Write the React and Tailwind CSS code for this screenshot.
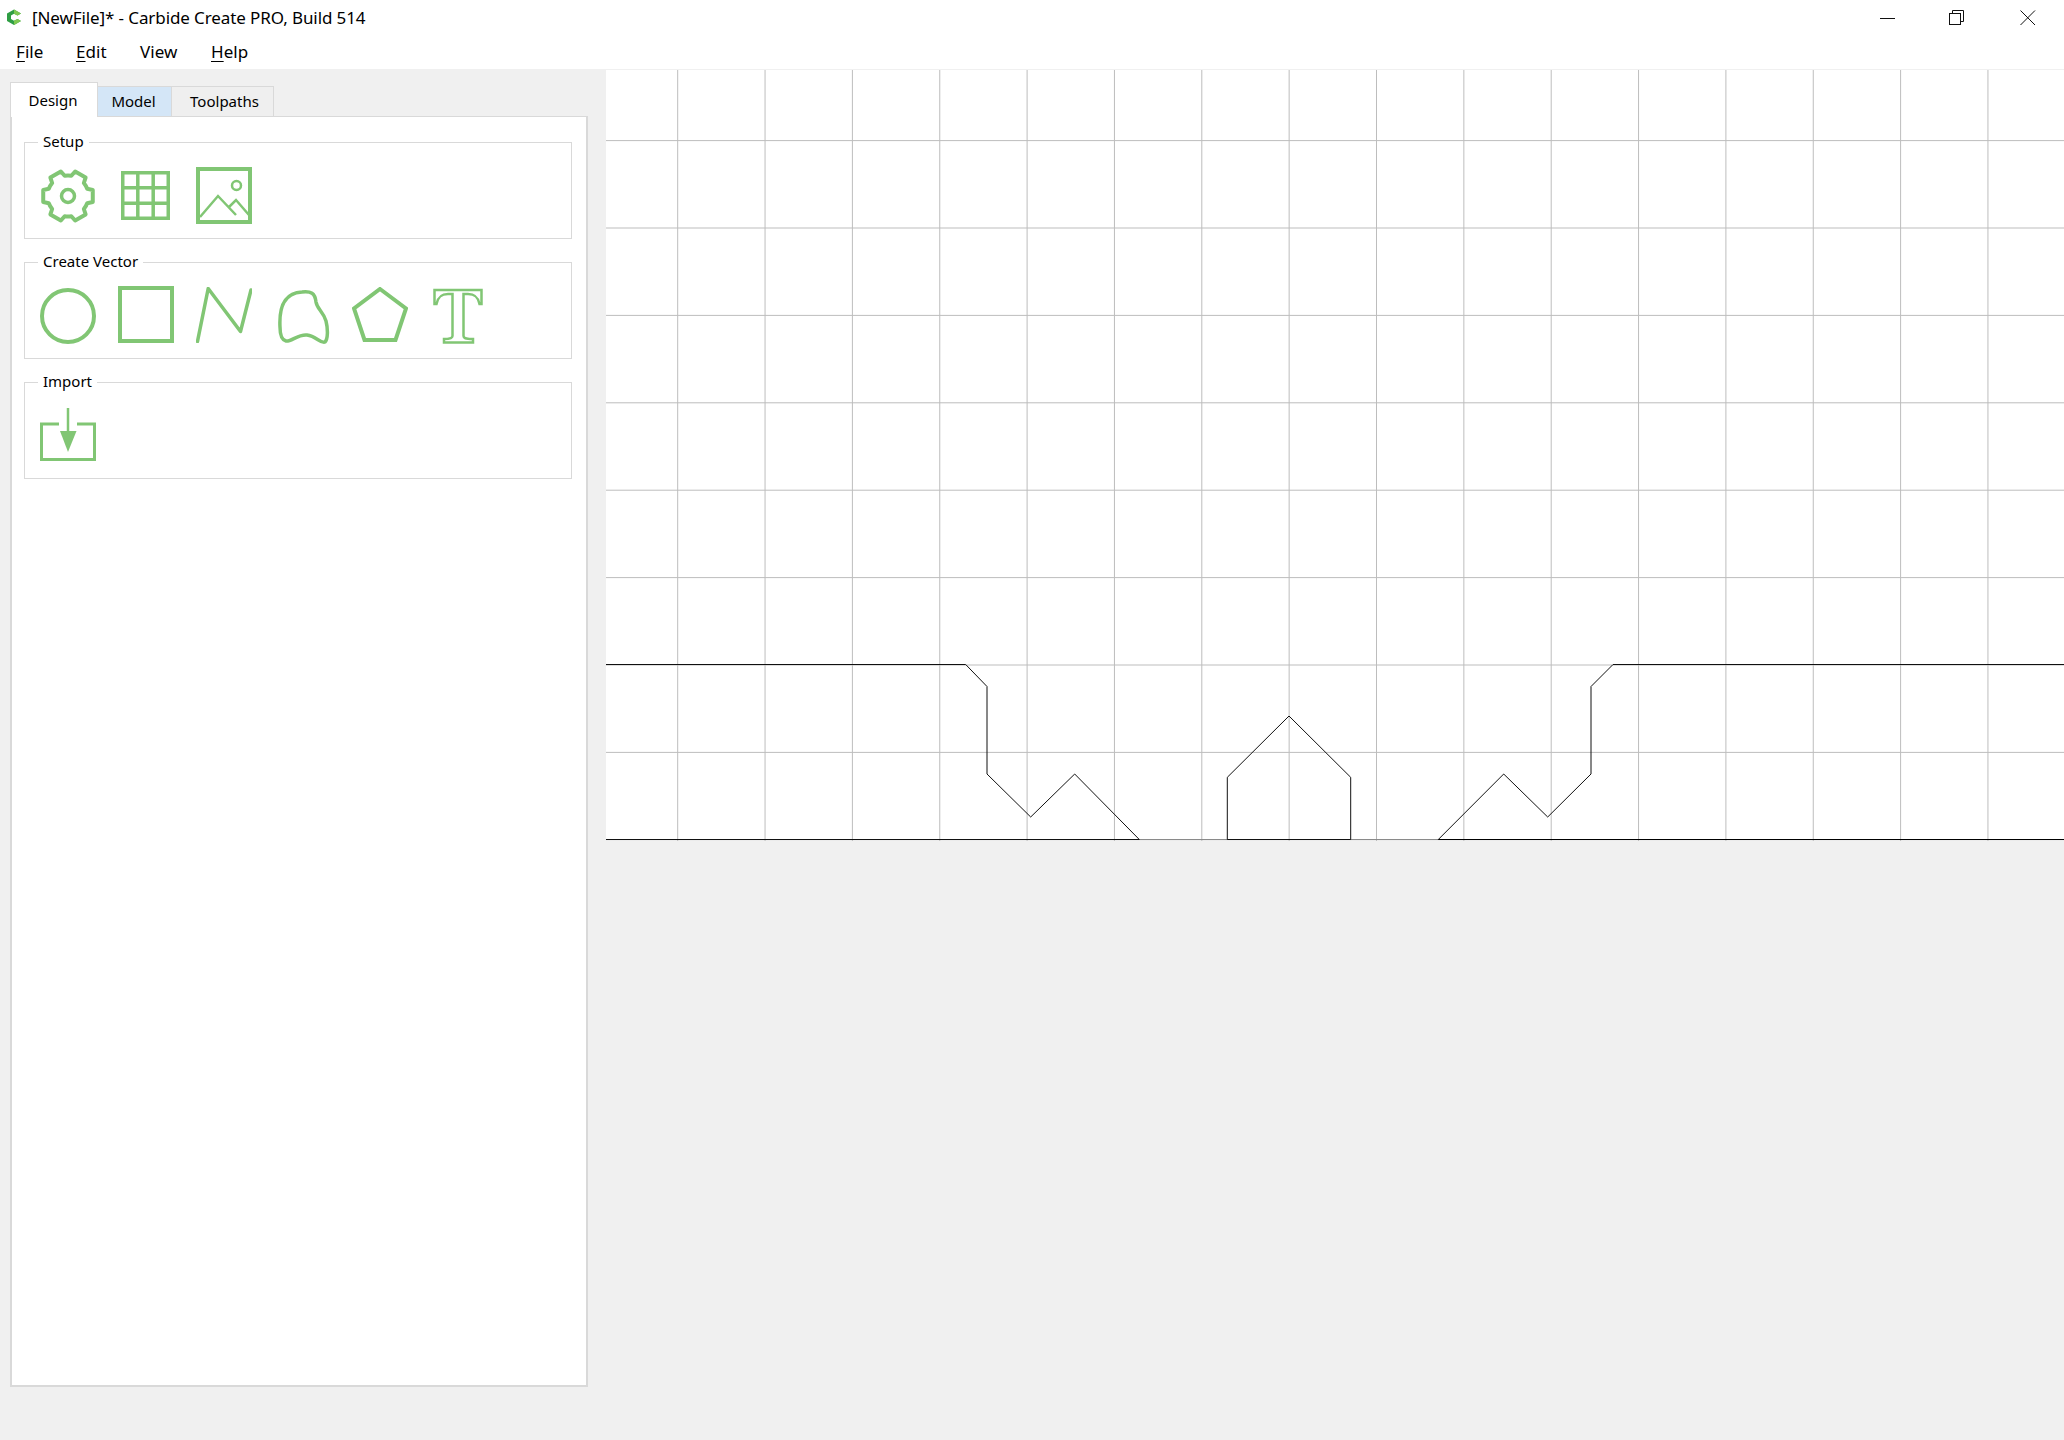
const GREEN = "#81c674";

function Menu({ first, rest, u }) {
  return (
    <span>
      {u ? <span className="underline decoration-1 underline-offset-[3px]">{first}</span> : first}
      {rest}
    </span>
  );
}

function Logo() {
  return (
    <svg width="16" height="17" viewBox="0 0 16 17" className="shrink-0">
      <path d="M8 0.500 L15 4.500 L11.500 6.500 L8 4.700 L5 6.500 V10 L8 11.800 L11.500 10 L15 12 L8 16 L1 12 V4.500 Z" fill="#2f9e44" />
      <path d="M8 0.500 L15 4.500 L11.500 6.500 L8 4.700 Z M11.500 10 L15 12 L8 16 L8 11.800 Z" fill="#7ec850" />
    </svg>
  );
}

function Gear() {
  const cx = 28, cy = 28, r1 = 20.5, r2 = 25.5;
  let d = "";
  for (let i = 0; i < 6; i++) {
    const a = (i * Math.PI) / 3;
    const pts = [
      [r1, a - 0.36], [r2, a - 0.24], [r2, a + 0.24], [r1, a + 0.36],
    ];
    pts.forEach(([r, t], j) => {
      const x = (cx + r * Math.cos(t)).toFixed(2);
      const y = (cy + r * Math.sin(t)).toFixed(2);
      if (i === 0 && j === 0) d += `M${x} ${y} `;
      else if (j === 0) d += `A${r1} ${r1} 0 0 1 ${x} ${y} `;
      else d += `L${x} ${y} `;
    });
  }
  const a0 = -0.36;
  d += `A${r1} ${r1} 0 0 1 ${(cx + r1 * Math.cos(a0)).toFixed(2)} ${(cy + r1 * Math.sin(a0)).toFixed(2)} Z`;
  return (
    <svg width="56" height="56" viewBox="0 0 56 56" fill="none" stroke={GREEN} strokeWidth="4" className="mt-[1px]">
      <path d={d} strokeLinejoin="round" />
      <circle cx="28" cy="28" r="6.500" strokeWidth="3.500" />
    </svg>
  );
}

function GridIcon() {
  return (
    <svg width="49" height="49" viewBox="0 0 49 49" fill="none" stroke={GREEN} strokeWidth="3.500">
      <rect x="1.750" y="1.750" width="45.500" height="45.500" />
      <path d="M16.800 1.750V47.250M32.200 1.750V47.250M1.750 16.800H47.250M1.750 32.200H47.250" />
    </svg>
  );
}

function ImageIcon() {
  return (
    <svg width="56" height="57" viewBox="0 0 56 57" fill="none" stroke={GREEN}>
      <rect x="2" y="2" width="52" height="53" strokeWidth="4" />
      <circle cx="40.500" cy="18.500" r="4.500" strokeWidth="2.500" />
      <path d="M4 50 L22 29 L40 48 M33 40 L40 33 L53 48" strokeWidth="2.500" />
    </svg>
  );
}

function Circle() {
  return (
    <svg width="56" height="56" viewBox="0 0 56 56" fill="none" stroke={GREEN} strokeWidth="4">
      <circle cx="28" cy="28" r="26" />
    </svg>
  );
}

function Square() {
  return (
    <svg width="56" height="57" viewBox="0 0 56 57" fill="none" stroke={GREEN} strokeWidth="4">
      <rect x="2" y="2" width="52" height="53" />
    </svg>
  );
}

function Zig() {
  return (
    <svg width="56" height="56" viewBox="0 0 56 56" fill="none" stroke={GREEN} strokeWidth="3.500" strokeLinecap="round" strokeLinejoin="round">
      <path d="M1.500 54.500 L12.200 1.500 L44.500 44.500 L55 3" />
    </svg>
  );
}

function Blob() {
  return (
    <svg width="52" height="56" viewBox="0 0 52 56" fill="none" stroke={GREEN} strokeWidth="3.500">
      <path d="M2 38 C1 18 6 4 24 3 C33 2 37 4 38 13 C39 20 45 22 48 32 C50 40 50 50 47 53 C43 55 38 47 29 46 C20 45 13 53 8 52 C4 51 2 47 2 38 Z" />
    </svg>
  );
}

function Pentagon() {
  return (
    <svg width="56" height="56" viewBox="0 0 56 56" fill="none" stroke={GREEN} strokeWidth="4">
      <path d="M28 2 L54 21.500 L43.500 53 L12.500 53 L2 21.500 Z" />
    </svg>
  );
}

function TIcon() {
  return (
    <svg width="50" height="56" viewBox="0 0 50 56" fill="none" stroke={GREEN} strokeWidth="2.500">
      <path d="M1.500 2 H48.500 V16 H46.500 C45 9 42 6 35 6 H30.500 V48 C30.500 50 32 51 40 51 V54.500 H11 V51 C18 51 19.500 50 19.500 48 V6 H15 C8 6 5 9 3.500 16 H1.500 Z" />
    </svg>
  );
}

function ImportIcon() {
  return (
    <svg width="56" height="54" viewBox="0 0 56 54" fill="none">
      <path d="M19 17H1.500V52.500H54.500V17H37" stroke={GREEN} strokeWidth="3" />
      <path d="M28 1V26" stroke={GREEN} strokeWidth="2.500" />
      <path d="M20 24H36.500L28 45Z" fill={GREEN} />
    </svg>
  );
}

function Group({ title, children, className }) {
  return (
    <div className={"relative h-[97px] border border-[#d9d9d9] pl-[15px] " + className}>
      <span className="absolute left-[13px] top-[-12px] bg-white px-[5px] text-[15px] leading-[21px] text-black">{title}</span>
      {children}
    </div>
  );
}

function Canvas() {
  const vs = [];
  for (let i = 0; i < 16; i++) vs.push(71.7 + i * 87.35);
  const hs = [];
  for (let i = 0; i < 9; i++) hs.push(70.6 + i * 87.4);
  const W = 1458, H = 771;
  const left = "M0 594.500 H359.700 L381 616.500 V704 L424.700 747 L468.700 704 L533.300 769.500 H0";
  const right = "M832.300 769.500 L897.700 704 L941.700 747 L985 704 V616.500 L1007 594.500 H1458";
  const house = "M621.300 769.500 V707.300 L683 646 L744.700 707.300 V769.500 Z";
  return (
    <svg width={W} height={H} viewBox={`0 0 ${W} ${H}`} className="block">
      <rect width={W} height={H} fill="#ffffff" />
      {vs.map((x) => (
        <line key={x} x1={x} x2={x} y1="0" y2={H} stroke="#bdbdbd" strokeWidth="1" />
      ))}
      {hs.map((y) => (
        <line key={y} x1="0" x2={W} y1={y} y2={y} stroke="#bdbdbd" strokeWidth="1" />
      ))}
      <line x1="0" x2={W} y1="769.500" y2="769.500" stroke="#8a8a8a" strokeWidth="1" />
      <path d={left} fill="none" stroke="#111" strokeWidth="1" />
      <path d={right} fill="none" stroke="#111" strokeWidth="1" />
      <path d="M832.300 769.500 H1458" fill="none" stroke="#000" strokeWidth="1" />
      <path d={house} fill="none" stroke="#111" strokeWidth="1" />
    </svg>
  );
}

export default function App() {
  return (
    <div className="flex h-[1440px] w-[2064px] flex-col overflow-hidden bg-[#f0f0f0] font-['Noto_Sans','Liberation_Sans',sans-serif] text-black">
      <header className="h-[70px] shrink-0 border-b border-[#f0f0f0] bg-white">
        <div className="flex h-[35px] items-center pl-[6px]">
          <Logo />
          <span className="ml-[10px] text-[17px] leading-[22px] tracking-[-0.1px]">[NewFile]* - Carbide Create PRO, Build 514</span>
          <div className="ml-auto flex items-center">
            <svg width="16" height="16" viewBox="0 0 16 16" className="mr-[53px]" fill="none" stroke="#111" strokeWidth="1">
              <path d="M0 8.500H15" />
            </svg>
            <svg width="16" height="16" viewBox="0 0 16 16" className="mr-[55px]" fill="none" stroke="#111" strokeWidth="1">
              <rect x="0.500" y="3.500" width="11" height="11" />
              <path d="M3.500 3.500V0.500H14.500V11.500H11.500" />
            </svg>
            <svg width="16" height="16" viewBox="0 0 16 16" className="mr-[28px]" fill="none" stroke="#111" strokeWidth="1">
              <path d="M0.500 0.500L15 15M15 0.500L0.500 15" />
            </svg>
          </div>
        </div>
        <nav className="flex h-[34px] items-center pl-[16px] text-[17px] leading-[22px] tracking-[0.05px]">
          <span className="w-[60px]"><Menu first="F" rest="ile" u /></span>
          <span className="w-[64px]"><Menu first="E" rest="dit" u /></span>
          <span className="w-[71px]"><Menu first="View" rest="" /></span>
          <span><Menu first="H" rest="elp" u /></span>
        </nav>
      </header>
      <main className="flex min-h-0 flex-1 items-start">
        <section className="ml-[10px] flex h-[1317px] w-[578px] shrink-0 flex-col pt-[12px]">
          <div className="relative z-10 mb-[-1px] flex h-[35px] items-end text-[15px] leading-[21px]">
            <div className="flex h-[35px] w-[88px] items-center justify-center border border-b-0 border-[#d9d9d9] bg-white pr-[2px]">Design</div>
            <div className="flex h-[31px] w-[74px] items-center justify-center border-y border-r border-[#d9d9d9] bg-[#d4e6f7] pr-[2px]">Model</div>
            <div className="flex h-[31px] w-[102px] items-center justify-center border-y border-r border-[#d9d9d9] bg-[#efefef] pl-[4px]">Toolpaths</div>
          </div>
          <div className="flex-1 border-x-2 border-t border-b-2 border-[#d9d9d9] bg-white pr-[14px] pl-[12px] pt-[25px]">
            <Group title="Setup" className="flex items-start pt-[24px]">
              <Gear />
              <div className="ml-[25px] mt-[4px]"><GridIcon /></div>
              <div className="ml-[26px]"><ImageIcon /></div>
            </Group>
            <Group title="Create Vector" className="mt-[23px] flex items-start pt-[24px]">
              <div className="mt-[1px]"><Circle /></div>
              <div className="ml-[22px] mt-[-1px]"><Square /></div>
              <div className="ml-[22px]"><Zig /></div>
              <div className="ml-[26px] mt-[2px]"><Blob /></div>
              <div className="ml-[22px]"><Pentagon /></div>
              <div className="ml-[25px] mt-[1px]"><TIcon /></div>
            </Group>
            <Group title="Import" className="mt-[23px] pt-[24px]">
              <ImportIcon />
            </Group>
          </div>
        </section>
        <section className="ml-[18px] min-w-0 flex-1">
          <Canvas />
        </section>
      </main>
    </div>
  );
}
